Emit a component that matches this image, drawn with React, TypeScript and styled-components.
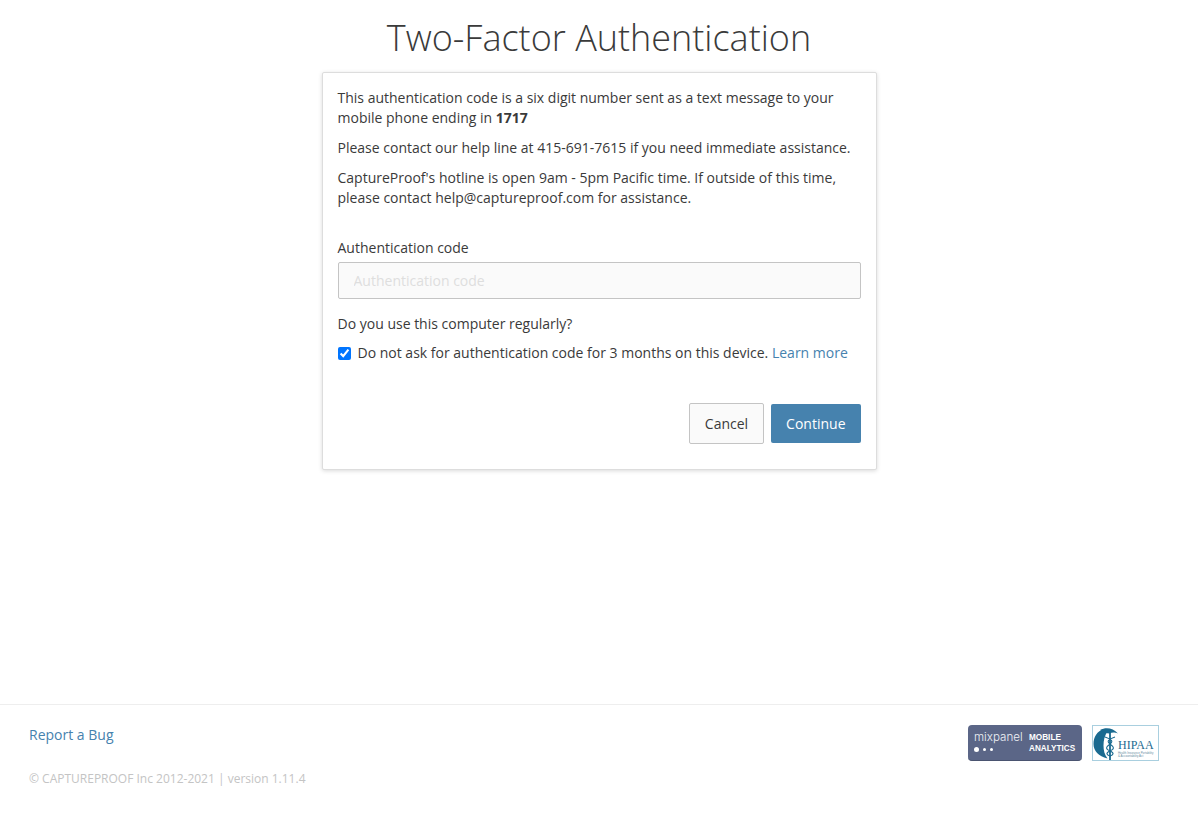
import React from 'react'
import styled, { createGlobalStyle } from 'styled-components'

const GlobalStyle = createGlobalStyle`
  html, body {
    margin: 0;
    padding: 0;
    background: #fff;
  }
  body {
    font-family: "Open Sans", "Liberation Sans", sans-serif;
    font-size: 14px;
    line-height: 20px;
    color: #3a3a3a;
  }
  * {
    box-sizing: border-box;
  }
`

const Page = styled.div`
  display: flex;
  flex-direction: column;
  height: 814px;
  overflow: hidden;
`

const Main = styled.main`
  flex: 1;
  display: flex;
  flex-direction: column;
  align-items: center;
`

const Title = styled.h1`
  margin: 0;
  padding-top: 13px;
  height: 72px;
  font-size: 36px;
  line-height: 50px;
  font-weight: 300;
  color: #3a3a3a;
`

const Card = styled.form`
  width: 555px;
  height: 398px;
  padding: 15px;
  background: #fff;
  border: 1px solid #ddd;
  border-radius: 2px;
  box-shadow: 0 1px 4px rgba(0, 0, 0, 0.15);
  display: flex;
  flex-direction: column;
`

const Paragraph = styled.p`
  margin: 0 0 10px;
`

const Label = styled.label<{ $top?: number }>`
  display: block;
  margin-top: ${({ $top }) => $top ?? 0}px;
  margin-bottom: 4px;
`

const Input = styled.input`
  display: block;
  width: 100%;
  height: 37px;
  padding: 0 15px;
  font: inherit;
  color: #333;
  background: #fafafa;
  border: 1px solid #c4c4c4;
  border-radius: 2px;
  &::placeholder {
    color: #dedede;
    opacity: 1;
  }
`

const Question = styled.div`
  margin-top: 15px;
`

const CheckRow = styled.label`
  display: flex;
  align-items: center;
  margin-top: 9px;
`

const Checkbox = styled.input`
  width: 13px;
  height: 13px;
  margin: 1px 7px 0 0;
  accent-color: #0075ff;
`

const TextLink = styled.a`
  color: #4682ae;
  text-decoration: none;
`

const Actions = styled.div`
  display: flex;
  justify-content: flex-end;
  align-items: center;
  gap: 7px;
  margin-top: 40px;
`

const Button = styled.button<{ $primary?: boolean }>`
  height: ${({ $primary }) => ($primary ? '39px' : '41px')};
  padding: 0 15px;
  font: inherit;
  color: ${({ $primary }) => ($primary ? '#fff' : '#3a3a3a')};
  background: ${({ $primary }) => ($primary ? '#4682ae' : '#fafafa')};
  border: ${({ $primary }) => ($primary ? 'none' : '1px solid #c4c4c4')};
  border-radius: 2px;
  cursor: pointer;
`

const Footer = styled.footer`
  height: 110px;
  border-top: 1px solid #eee;
  padding: 20px 39px 0 29px;
  display: flex;
  justify-content: space-between;
  align-items: flex-start;
`

const FooterLeft = styled.div`
  display: flex;
  flex-direction: column;
  gap: 24px;
`

const Copyright = styled.div`
  font-size: 12px;
  color: #c4c4c4;
`

const Badges = styled.div`
  display: flex;
  gap: 10px;
`

const Mixpanel = styled.div`
  width: 114px;
  height: 36px;
  padding: 5px 0 0 6px;
  display: flex;
  gap: 6px;
  background: #5b6687;
  border-radius: 4px;
  border-bottom: 1px solid #4a5470;
  color: #fff;
`

const MixpanelBrand = styled.div`
  font-family: Inter, "Liberation Sans", sans-serif;
  font-size: 11.6px;
  font-weight: 300;
  line-height: 14px;
  width: 49px;
  white-space: nowrap;
  color: #eef0f5;
`

const Dots = styled.div`
  display: flex;
  align-items: center;
  gap: 4px;
  height: 6px;
  margin-top: 2px;
`

const Dot = styled.span<{ $size: number }>`
  width: ${({ $size }) => $size}px;
  height: ${({ $size }) => $size}px;
  border-radius: 50%;
  background: #fff;
`

const MixpanelTag = styled.div`
  font-family: "Liberation Sans", sans-serif;
  font-size: 8.2px;
  font-weight: 700;
  line-height: 11px;
  padding-top: 2px;
  white-space: nowrap;
  display: flex;
  flex-direction: column;
`

const Hipaa = styled.svg`
  display: block;
  width: 67px;
  height: 36px;
`

const HipaaLogo = () => (
  <Hipaa viewBox="0 0 67 36">
    <rect x="0.5" y="0.5" width="66" height="35" fill="#fff" stroke="#a9cfdf" />
    <path d="M12 4C5 6 1.500 12 1.500 19c0 7 5 12 14 14.500-3-4-4-8-4-13 0-5 1-10 4-14z" fill="#1a6a90" />
    <path d="M8 5c6-3 13-2 18 3.500-4-1.500-6-1-8.500 0-3 0-6-1.500-9.500-3.500z" fill="#1a6a90" />
    <path d="M18 5v30" stroke="#1a6a90" strokeWidth="1.8" fill="none" />
    <path d="M13 12c6 2 9 4 5 7s-5 5 0 7 3 4 0 5M23 12c-6 2-9 4-5 7s5 5 0 7-3 4 0 5" stroke="#1a6a90" strokeWidth="1.1" fill="none" />
    <text x="26" y="24" fontFamily="'Liberation Serif', serif" fontSize="12" fill="#1a6a90">HIPAA</text>
    <text x="26" y="28.500" fontFamily="'Liberation Sans', sans-serif" fontSize="2.9" fill="#6b8fa3">Health Insurance Portability</text>
    <text x="26" y="32" fontFamily="'Liberation Sans', sans-serif" fontSize="2.9" fill="#6b8fa3">&amp; Accountability Act</text>
  </Hipaa>
)

export default function App() {
  return (
    <>
      <GlobalStyle />
      <Page>
        <Main>
          <Title>Two-Factor Authentication</Title>
          <Card onSubmit={e => e.preventDefault()}>
            <Paragraph>
              This authentication code is a six digit number sent as a text message to your
              mobile phone ending in <strong>1717</strong>
            </Paragraph>
            <Paragraph>Please contact our help line at 415-691-7615 if you need immediate assistance.</Paragraph>
            <Paragraph>
              CaptureProof's hotline is open 9am - 5pm Pacific time. If outside of this time,
              please contact help@captureproof.com for assistance.
            </Paragraph>
            <Label $top={20} htmlFor="code">Authentication code</Label>
            <Input id="code" placeholder="Authentication code" />
            <Question>Do you use this computer regularly?</Question>
            <CheckRow>
              <Checkbox type="checkbox" defaultChecked />
              <span>
                Do not ask for authentication code for 3 months on this device.{' '}
                <TextLink href="#">Learn more</TextLink>
              </span>
            </CheckRow>
            <Actions>
              <Button type="button">Cancel</Button>
              <Button $primary type="submit">Continue</Button>
            </Actions>
          </Card>
        </Main>
        <Footer>
          <FooterLeft>
            <TextLink href="#">Report a Bug</TextLink>
            <Copyright>© CAPTUREPROOF Inc 2012-2021 | version 1.11.4</Copyright>
          </FooterLeft>
          <Badges>
            <Mixpanel>
              <div>
                <MixpanelBrand>mixpanel</MixpanelBrand>
                <Dots>
                  <Dot $size={5} />
                  <Dot $size={3} />
                  <Dot $size={3} />
                </Dots>
              </div>
              <MixpanelTag>
                <span>MOBILE</span>
                <span>ANALYTICS</span>
              </MixpanelTag>
            </Mixpanel>
            <HipaaLogo />
          </Badges>
        </Footer>
      </Page>
    </>
  )
}
